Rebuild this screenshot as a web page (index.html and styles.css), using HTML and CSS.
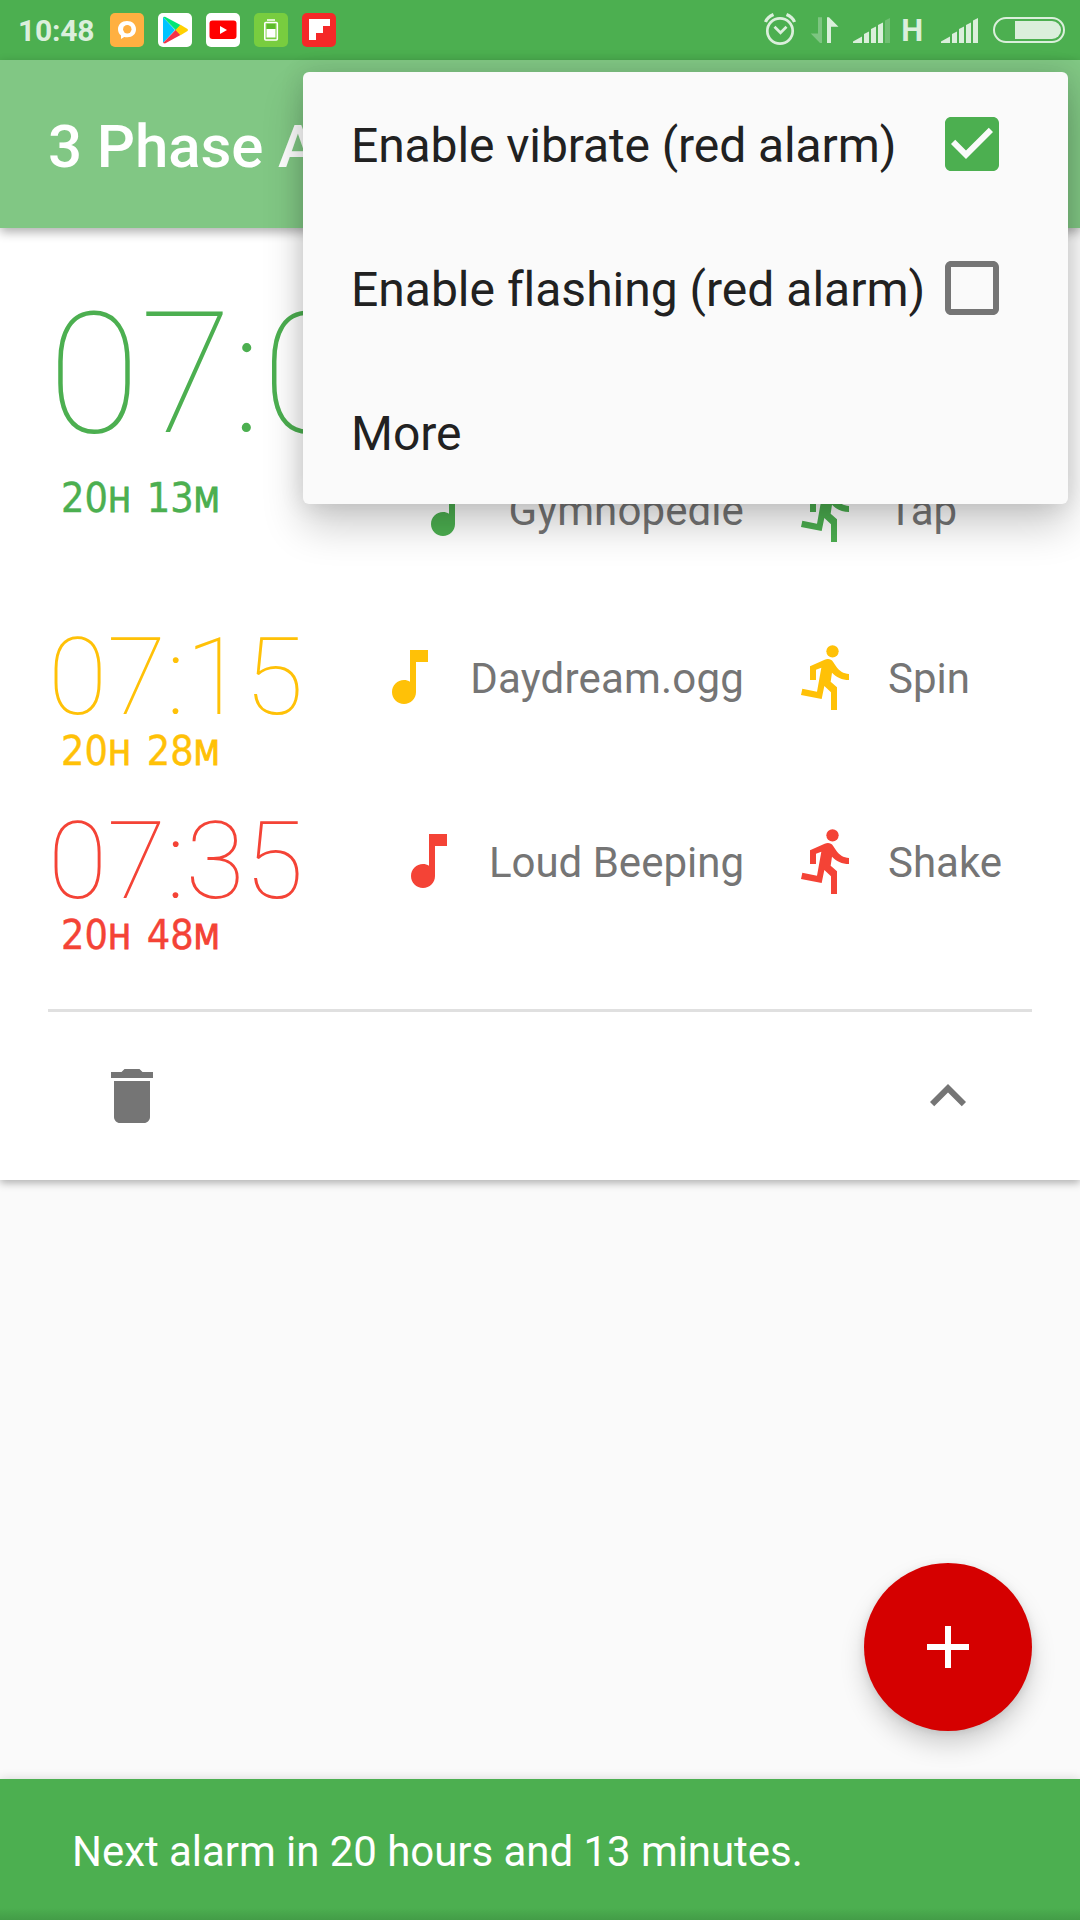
FILE: index.html
```html
<!DOCTYPE html>
<html lang="en">
<head>
<meta charset="utf-8">
<title>3 Phase Alarm</title>
<link rel="stylesheet" href="styles.css">
</head>
<body>
<svg class="defs" width="0" height="0" aria-hidden="true">
  <symbol id="note" viewBox="0 0 24 24"><path d="M12 3v10.55c-.59-.34-1.27-.55-2-.55-2.21 0-4 1.79-4 4s1.79 4 4 4 4-1.79 4-4V7h4V3z"/></symbol>
  <symbol id="run" viewBox="156 123 216 216"><circle cx="277.500" cy="154" r="18.500"/><path d="M210 240V199L254 179C264 175.500 274 177 279 185L288 199C296 212 311 222 327 222V240C306 240 288 231 276 218L272 245L291 262V330H273V277L253 258L245 297L183 285L187 266L231 275L244 203L228 209V240Z"/></symbol>
</svg>
<div class="screen">
  <header class="status">
    <span class="clock">10:48</span>
    <div class="notifications">
      <svg viewBox="0 0 34 34"><rect width="34" height="34" rx="5" fill="#ffb041"/><path d="M17 8c5.200 0 9 3.500 9 8.300s-3.600 8-8.600 8c-1.500 0-2.700-.3-3.200-.3L11 26v-3.600C9 20.800 8 18.700 8 16.200 8 11.500 11.800 8 17 8z" fill="#fff"/><circle cx="17.300" cy="16.200" r="4.200" fill="#ffb041"/></svg>
      <svg viewBox="0 0 34 34"><rect width="34" height="34" rx="5" fill="#fff"/><path d="M5 4v26L17 17z" fill="#00c3ff"/><path d="M5 4l2-.2L22.500 12 18 17.500z" fill="#00e676"/><path d="M5 30l2 .5L22.500 22 18 16.500z" fill="#f43249"/><path d="M22.500 11.800L29.500 16q1 1 0 2l-7 4.200-5-5.200z" fill="#ffd000"/></svg>
      <svg viewBox="0 0 34 34"><rect width="34" height="34" rx="5" fill="#fff"/><rect x="3.500" y="7.500" width="27" height="18.500" rx="3" fill="#f00"/><path d="M14 13v8l7-4z" fill="#fff"/></svg>
      <svg viewBox="0 0 34 34"><rect width="34" height="34" rx="5" fill="#78cd3f"/><path d="M13 7h8" stroke="#fff" stroke-width="1.500"/><rect x="10.800" y="9.500" width="12.500" height="17.500" rx="1" fill="none" stroke="#fff" stroke-width="1.600"/><path d="M13 11h8v5h-8z" fill="#5dbb2c"/><path d="M12.500 16h9v8.500h-9z" fill="#fff"/></svg>
      <svg viewBox="0 0 34 34"><rect width="34" height="34" rx="5" fill="#f52828"/><path d="M7 6h21v7h-7v7h-7v7H7z" fill="#fff"/></svg>
    </div>
    <svg class="system" viewBox="0 0 310 60" fill="#dbefdc">
      <g fill="none" stroke="#dbefdc">
        <circle cx="20" cy="31" r="12.700" stroke-width="2.700"/>
        <path d="M14.500 26.800l6 6 6-6" stroke-width="2.700"/>
        <path d="M5.500 22q2-5 8-7.500M34.500 22q-2-5-8-7.500" stroke-width="3.200"/>
        <rect x="234" y="18" width="70" height="24" rx="12" stroke-width="2"/>
      </g>
      <path d="M58 17.300h4V43h-2l-9.300-9.500H58z" opacity=".35"/>
      <path d="M67 17.300h2l9.500 9.500H71V43h-4z"/>
      <path d="M93 43v-1.500l9-5V43zM104 43V34l5-2.500V43zM111 43V29l5-2.500V43zM118 43V25l5-2.500V43z"/>
      <path d="M125 43V20.500l5-2.500v25z" opacity=".25"/>
      <text x="141.300" y="41" class="network">H</text>
      <path d="M181 43v-1.500l9-5V43zM192 43V34l5-2.500V43zM199 43V29l5-2.500V43zM206 43V25l5-2.500V43zM213 43V20.500l5-2.500v25z"/>
      <path d="M255 21h37a9 9 0 0 1 0 18h-37z"/>
    </svg>
  </header>

  <div class="appbar"><h1>3 Phase Alarm</h1></div>

  <main class="card">
    <section class="phase phase-main green">
      <div class="when"><div class="time">07:00</div><div class="left">20<small>H</small> 13<small>M</small></div></div>
      <div class="sound"><svg><use href="#note"/></svg><span>Gymnopedie</span></div>
      <div class="action"><svg><use href="#run"/></svg><span>Tap</span></div>
    </section>
    <section class="phase yellow">
      <div class="when"><div class="time">07:15</div><div class="left">20<small>H</small> 28<small>M</small></div></div>
      <div class="sound"><svg><use href="#note"/></svg><span class="loose">Daydream.ogg</span></div>
      <div class="action"><svg><use href="#run"/></svg><span>Spin</span></div>
    </section>
    <section class="phase red">
      <div class="when"><div class="time">07:35</div><div class="left">20<small>H</small> 48<small>M</small></div></div>
      <div class="sound"><svg><use href="#note"/></svg><span>Loud Beeping</span></div>
      <div class="action"><svg><use href="#run"/></svg><span>Shake</span></div>
    </section>
    <footer class="tools">
      <svg viewBox="0 0 24 24"><path d="M6 19c0 1.100.9 2 2 2h8c1.100 0 2-.9 2-2V7H6zM19 4h-3.500l-1-1h-5l-1 1H5v2h14z"/></svg>
      <svg viewBox="0 0 24 24"><path d="M12 8l-6 6 1.410 1.410L12 10.830l4.590 4.580L18 14z"/></svg>
    </footer>
  </main>

  <button class="fab" aria-label="Add alarm"><svg viewBox="0 0 24 24"><path d="M19 13h-6v6h-2v-6H5v-2h6V5h2v6h6z"/></svg></button>

  <div class="snackbar">Next alarm in 20 hours and 13 minutes.</div>

  <div class="menu">
    <div class="item"><span class="tight">Enable vibrate (red alarm)</span><svg class="checked" viewBox="0 0 24 24"><path d="M19 3H5c-1.110 0-2 .9-2 2v14c0 1.100.89 2 2 2h14c1.110 0 2-.9 2-2V5c0-1.100-.89-2-2-2zm-9 14l-5-5 1.410-1.410L10 14.170l7.590-7.590L19 8z"/></svg></div>
    <div class="item"><span>Enable flashing (red alarm)</span><svg viewBox="0 0 24 24"><path d="M19 5v14H5V5h14m0-2H5c-1.100 0-2 .9-2 2v14c0 1.100.9 2 2 2h14c1.100 0 2-.9 2-2V5c0-1.100-.9-2-2-2z"/></svg></div>
    <div class="item"><span>More</span></div>
  </div>
</div>
</body>
</html>
```

FILE: styles.css
```css
* { box-sizing: border-box; }

body {
  margin: 0;
  font-family: Roboto, "Liberation Sans", sans-serif;
}

.defs { position: absolute; }

.screen {
  position: relative;
  display: flex;
  flex-direction: column;
  width: 1080px;
  height: 1920px;
  overflow: hidden;
  background: #fafafa;
}

/* Status bar */
.status {
  display: flex;
  align-items: center;
  height: 60px;
  padding-left: 18px;
  background: #4caf50;
}

.clock {
  width: 92px;
  padding-top: 1px;
  font-size: 30px;
  font-weight: 700;
  line-height: 60px;
  letter-spacing: -.2px;
  color: #dbefdc;
}

.notifications { display: flex; gap: 14px; }
.notifications svg { width: 34px; height: 34px; }
.system { width: 310px; height: 60px; margin-left: auto; margin-right: 10px; }
.network { font-size: 31px; font-weight: 700; }

/* App bar */
.appbar {
  position: relative;
  z-index: 1;
  height: 168px;
  padding: 5px 48px 0;
  background: #81c784;
  box-shadow: 0 4px 10px rgba(0, 0, 0, .32);
}

.appbar h1 {
  margin: 0;
  font-size: 60px;
  font-weight: 500;
  line-height: 163px;
  letter-spacing: -.1px;
  color: #fff;
}

/* Alarm card */
.card {
  height: 952px;
  background: #fff;
  box-shadow: 0 3px 8px rgba(0, 0, 0, .3);
}

.phase {
  display: grid;
  grid-template-columns: 300px 396px 1fr;
  column-gap: 48px;
  height: 184px;
}

.phase-main { height: 357px; }

.green { color: #4caf50; }
.yellow { color: #ffc107; }
.red { color: #f44336; }

.when { padding: 38px 0 0 48px; white-space: nowrap; }
.phase-main .when { padding-top: 63px; }

.time { font-size: 108px; font-weight: 100; line-height: 104px; }
.phase-main .time { font-size: 168px; line-height: 168px; }
.yellow .when, .red .when { padding-top: 40px; }

.left {
  margin: -2px 0 0 13px;
  font-family: "DejaVu Sans Condensed", "DejaVu Sans", sans-serif;
  font-stretch: condensed;
  font-size: 41px;
  line-height: 48px;
  word-spacing: 4px;
  -webkit-text-stroke: .4px currentColor;
}
.phase-main .left { margin-top: 15px; }
.left small { font-size: 34px; -webkit-text-stroke-width: 1px; }

.sound, .action {
  display: flex;
  align-items: center;
  gap: 24px;
  height: 184px;
  font-size: 42px;
  white-space: nowrap;
}
.phase-main .sound, .phase-main .action { align-self: end; height: 152px; }
.sound { justify-content: flex-end; }
.sound svg, .action svg { width: 72px; height: 72px; fill: currentColor; }
.sound span, .action span { padding-top: 3px; color: #757575; }
.sound .loose { letter-spacing: .2px; }
.phase-main .sound span { letter-spacing: .1px; }

.tools {
  display: flex;
  justify-content: space-between;
  margin: 56px 48px 0;
  padding: 48px;
  border-top: 3px solid #e0e0e0;
}
.tools svg { width: 72px; height: 72px; fill: #757575; }

/* Floating button and bottom message */
.fab {
  position: absolute;
  right: 48px;
  bottom: 189px;
  display: grid;
  place-items: center;
  width: 168px;
  height: 168px;
  padding: 0;
  border: 0;
  border-radius: 50%;
  background: #d50000;
  box-shadow: 0 14px 24px rgba(0, 0, 0, .17), 0 2px 8px rgba(0, 0, 0, .1);
}
.fab svg { width: 72px; height: 72px; fill: #fff; }

.snackbar {
  height: 141px;
  margin-top: auto;
  padding: 5px 72px 0;
  background: linear-gradient(to top, #439c47, #4caf50 12px);
  box-shadow: 0 0 10px rgba(0, 0, 0, .15);
  font-size: 42px;
  line-height: 136px;
  letter-spacing: -.05px;
  color: #fff;
}

/* Overflow menu */
.menu {
  position: absolute;
  z-index: 2;
  top: 72px;
  right: 12px;
  width: 765px;
  border-radius: 6px;
  background: #fafafa;
  box-shadow: 0 22px 42px rgba(0, 0, 0, .2), 0 0 24px rgba(0, 0, 0, .12);
}

.item {
  display: flex;
  align-items: center;
  justify-content: space-between;
  height: 144px;
  padding: 0 60px 0 48px;
  font-size: 48px;
  font-variant-ligatures: none;
  color: #212121;
  white-space: nowrap;
}
.item span { padding-top: 3px; }
.item .tight { letter-spacing: -.1px; }
.item svg { flex: none; width: 72px; height: 72px; fill: #757575; }
.item .checked { fill: #4caf50; }
```
